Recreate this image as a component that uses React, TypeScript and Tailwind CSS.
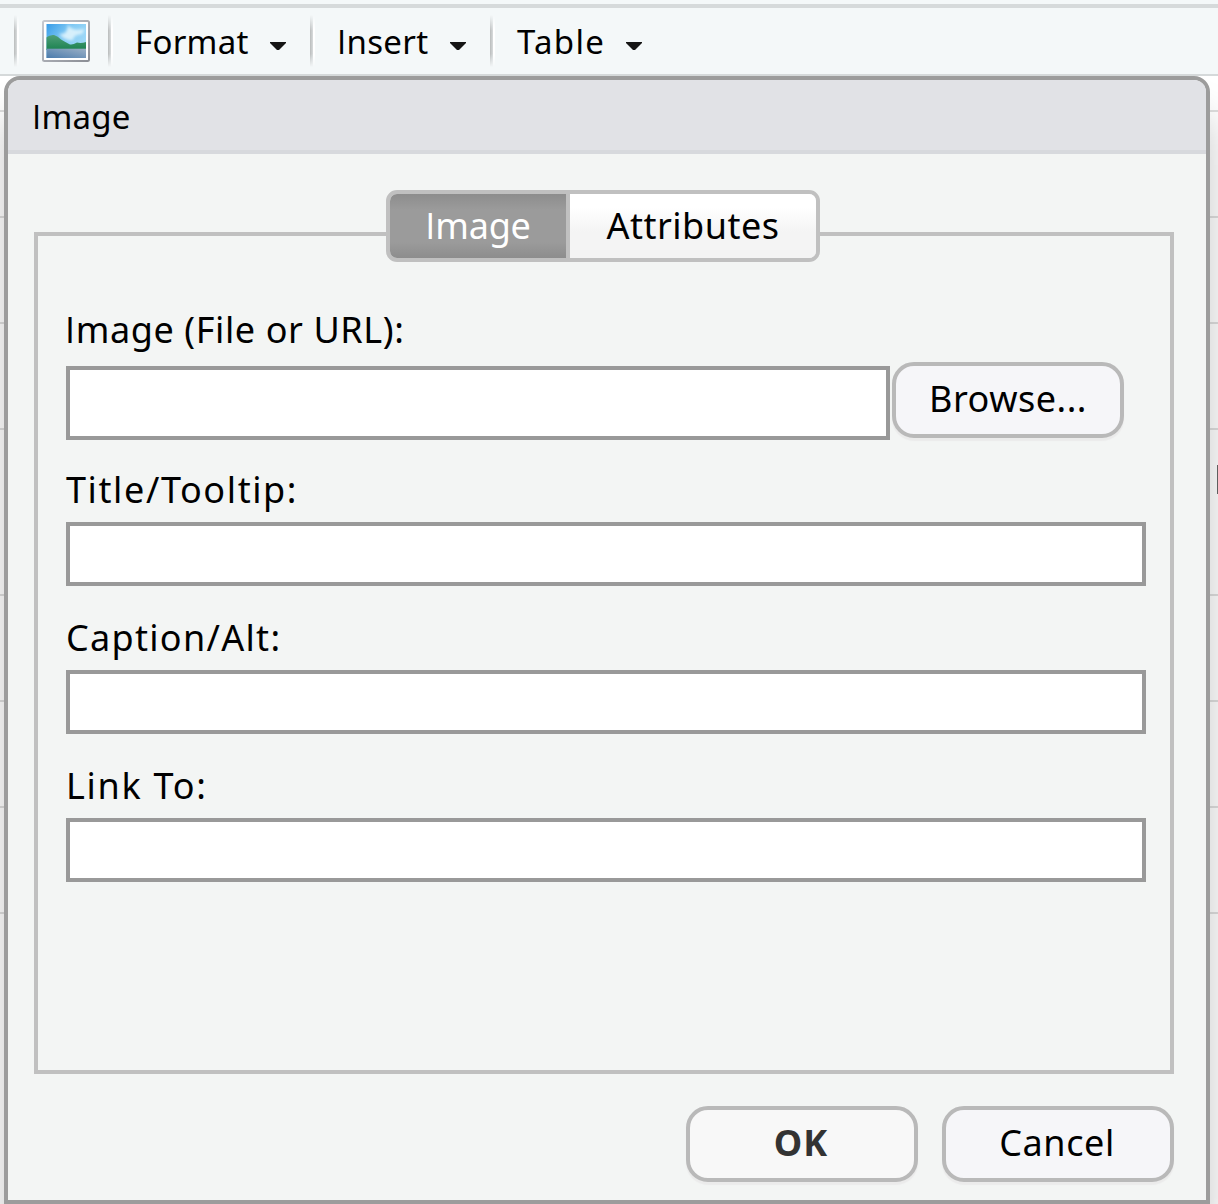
import React from 'react';

const rowHeights = [
  'h-[36px]', 'h-[106px]', 'h-[106px]', 'h-[106px]', 'h-[166px]', 'h-[106px]', 'h-[106px]', 'h-[106px]',
];

function Separator() {
  return (
    <div className="flex h-[52px] w-[6px] shrink-0 [mask-image:linear-gradient(transparent,black_30%,black_75%,transparent)]">
      <div className="w-[3px] bg-linear-to-r from-[#b9bcbc] to-[#d9dcdd]" />
      <div className="w-[2px] bg-white" />
    </div>
  );
}

/* Capital I without serifs, followed by the rest of the word. */
function PlainI({ rest }: { rest: string }) {
  return (
    <>
      <span className="font-['Open_Sans']">I</span>
      {rest}
    </>
  );
}

function PictureIcon() {
  return (
    <svg width="48" height="42" viewBox="0 0 48 42" className="shrink-0">
      <defs>
        <linearGradient id="frame" x1="0" y1="0" x2="1" y2="1">
          <stop offset="0" stopColor="#c6c9d0" />
          <stop offset="1" stopColor="#8b8e95" />
        </linearGradient>
        <linearGradient id="sky" x1="0" y1="0" x2="1" y2="0.7">
          <stop offset="0" stopColor="#369be8" />
          <stop offset="0.5" stopColor="#85cbf4" />
          <stop offset="1" stopColor="#a5dcf8" />
        </linearGradient>
        <linearGradient id="hill" x1="0" y1="0" x2="0" y2="1">
          <stop offset="0" stopColor="#4f9f78" />
          <stop offset="1" stopColor="#1c8250" />
        </linearGradient>
        <linearGradient id="lake" x1="0" y1="1" x2="1" y2="0">
          <stop offset="0" stopColor="#4779ab" />
          <stop offset="1" stopColor="#9bb0c6" />
        </linearGradient>
        <filter id="soft"><feGaussianBlur stdDeviation="1.7" /></filter>
        <clipPath id="view"><rect x="4.500" y="4" width="39.500" height="34" /></clipPath>
      </defs>
      <rect x="1" y="1" width="46" height="40" rx="1.5" fill="#fff" stroke="url(#frame)" strokeWidth="2" />
      <g clipPath="url(#view)">
        <rect x="4" y="4" width="40" height="34" fill="url(#sky)" />
        <path d="M26 4Q29 12 43 9L40 14Q31 15 31 20Q23 21 17 14Q26 15 26 4Z" fill="#e4f6fd" filter="url(#soft)" opacity="0.85" />
        <path d="M4 17.500Q8 14.500 12 15Q16 16 19 19.500Q24 22.500 28 24.500Q31 25 35 22.500Q39 23.500 44 22V30H4Z" fill="url(#hill)" />
        <rect x="4" y="28.700" width="40" height="10" fill="url(#lake)" />
      </g>
    </svg>
  );
}

function MenuItem({ label, className }: { label: React.ReactNode; className: string }) {
  return (
    <button className={`flex h-[66px] shrink-0 items-center justify-between text-[33px] leading-[66px] whitespace-nowrap ${className}`}>
      <span className="mt-[2px]">{label}</span>
      <svg width="16" height="8" viewBox="0 0 16 8" className="mt-[10px]">
        <path d="M0 0H16V1L9 8H7L0 1Z" fill="#151515" />
      </svg>
    </button>
  );
}

function Field({ label, className }: { label: string; className: string }) {
  return (
    <label className="block h-[148px]">
      <span className={`block h-[56px] w-max pt-px text-[36px] leading-[46px] ${className}`}>{label}</span>
      <input className="block h-[64px] w-[1080px] border-4 border-[#999] bg-white outline-none" />
    </label>
  );
}

const buttonBase =
  'h-[76px] w-[232px] shrink-0 rounded-[22px] border-4 border-[#b9b9b9] text-[36px] leading-[66px] pb-[2px] shadow-[0_3px_1px_#ebebeb]';

export default function App() {
  return (
    <div className="relative h-[1204px] w-[1218px] overflow-hidden bg-white font-['Noto_Sans',sans-serif] text-black">
      <div className="h-1 bg-[#f4f8f9]" />
      <div className="flex h-[72px] items-center border-t-4 border-b-2 border-t-[#d6dadb] border-b-[#d5d9da] bg-[#f4f8f9] pl-[14px]">
        <Separator />
        <div className="mr-[18px] ml-[22px]"><PictureIcon /></div>
        <Separator />
        <MenuItem label="Format" className="ml-[21px] mr-[24px] w-[151px] tracking-[0.3px]" />
        <Separator />
        <MenuItem label={<PlainI rest="nsert" />} className="ml-[21px] mr-[24px] w-[129px] tracking-[0.3px]" />
        <Separator />
        <MenuItem label="Table" className="ml-[21px] w-[125px] tracking-[1.3px]" />
      </div>
      <div>
        {rowHeights.map((h, i) => (
          <div key={i} className={`border-b-2 border-[#dedede] ${h}`}>
            {i === 4 && (
              <div className="flex justify-end pt-[35px]">
                <div className="h-[29px] w-px bg-[#666]" />
              </div>
            )}
          </div>
        ))}
      </div>
      <div className="absolute inset-x-0 top-[76px] bottom-0 overflow-hidden">
        <div
          role="dialog"
          className="ml-1 h-[1128px] w-[1206px] rounded-t-[16px] border-4 border-[#9c9c9c] bg-[#f3f5f4] shadow-[0_40px_40px_rgba(0,0,0,0.22)]"
        >
          <div className="h-[74px] rounded-t-[12px] border-b-4 border-[#d7d9dd] bg-[#e1e2e6] pt-px pl-[24px] text-[33px] leading-[72px]">
            <span className="tracking-[0.2px]"><PlainI rest="mage" /></span>
          </div>
          <div className="mt-[78px] ml-[26px] h-[842px] w-[1140px] border-4 border-[#c0c0c0] px-[28px]">
            <div className="-mt-[46px] ml-[320px] flex h-[72px] w-[434px] overflow-hidden rounded-[11px] border-4 border-[#c0c0c0] text-[36px] leading-[64px]">
              <button className="w-[176px] bg-[linear-gradient(#8d8d8d,#9b9b9b_25%,#9b9b9b_75%,#8d8d8d)] text-center text-white">
                <span className="tracking-[-0.2px]"><PlainI rest="mage" /></span>
              </button>
              <button className="flex-1 border-l-4 border-[#c0c0c0] bg-[linear-gradient(#fff_20%,#f4f4f4_60%)] text-center">
                <span className="tracking-[0.5px]">Attributes</span>
              </button>
            </div>
            <label className="mt-[44px] -ml-px block h-[44px] w-max pt-px text-[36px] leading-[46px] tracking-[0.6px]">
              <PlainI rest="mage (File or URL):" />
            </label>
            <div className="mt-[12px] flex h-[78px] gap-[2px]">
              <input className="mt-[4px] h-[74px] w-[824px] border-4 border-[#999] bg-white outline-none" />
              <button className={`${buttonBase} bg-[#f6f6f9]`}><span className="tracking-[0.5px]">Browse...</span></button>
            </div>
            <div className="mt-[26px]">
              <Field label="Title/Tooltip:" className="tracking-[1.6px]" />
              <Field label="Caption/Alt:" className="tracking-[1.3px]" />
              <Field label="Link To:" className="tracking-[1.7px]" />
            </div>
          </div>
          <div className="mt-[32px] mr-[32px] flex justify-end gap-[24px]">
            <button className={`${buttonBase} bg-[#f8f8f8] pr-[2px] font-bold text-[#333]`}><span className="tracking-[1px]">OK</span></button>
            <button className={`${buttonBase} bg-[#f6f6f9] pr-[2px]`}><span className="tracking-[0.6px]">Cancel</span></button>
          </div>
        </div>
      </div>
    </div>
  );
}
